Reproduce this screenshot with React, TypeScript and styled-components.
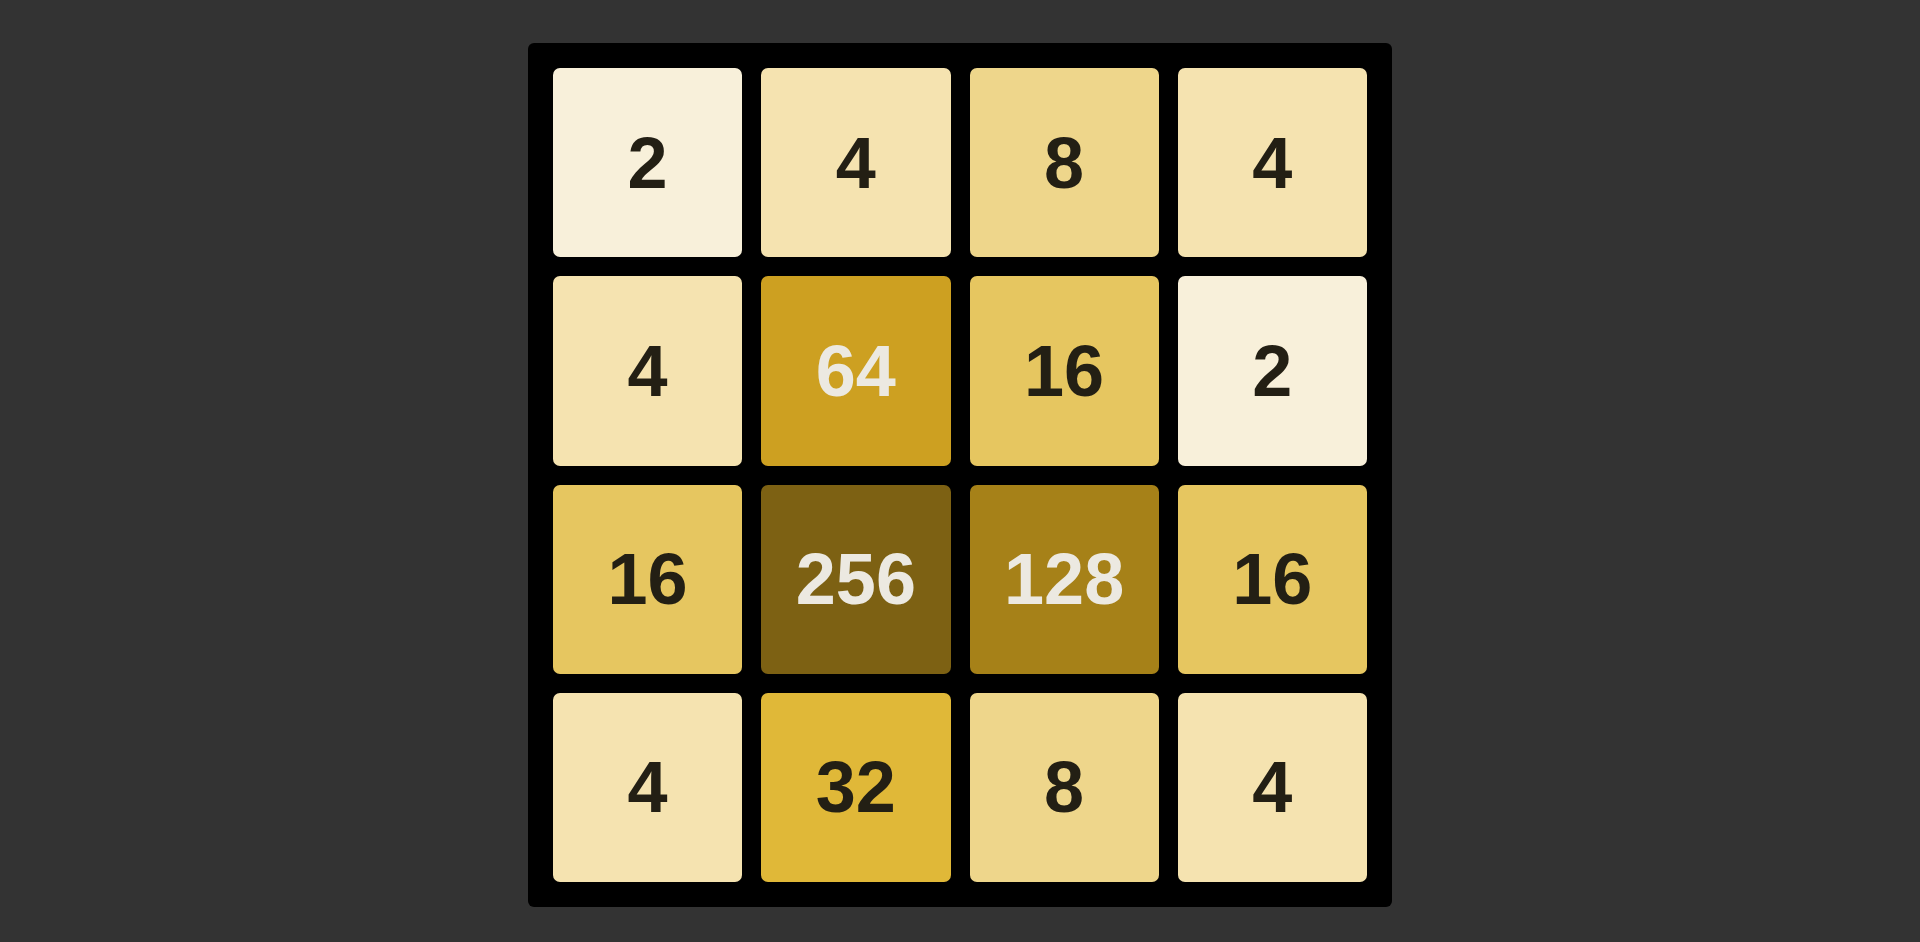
import React from "react";
import styled, { createGlobalStyle } from "styled-components";

const GlobalStyle = createGlobalStyle`
  html, body {
    margin: 0;
    padding: 0;
    background: #333333;
  }
  body {
    font-family: "Liberation Sans", Arial, sans-serif;
  }
`;

const Page = styled.div`
  min-height: 942px;
  box-sizing: border-box;
  padding-top: 43px;
  display: flex;
  justify-content: center;
  align-items: flex-start;
`;

const Board = styled.div`
  width: 864px;
  height: 864px;
  box-sizing: border-box;
  padding: 25px;
  background: #000000;
  border-radius: 6px;
  display: grid;
  grid-template-columns: repeat(4, 1fr);
  grid-template-rows: repeat(4, 1fr);
  gap: 19px;
`;

const palette: Record<number, { bg: string; fg: string }> = {
  2: { bg: "#f8f0da", fg: "#231f14" },
  4: { bg: "#f5e3b0", fg: "#231f14" },
  8: { bg: "#eed68b", fg: "#231f14" },
  16: { bg: "#e6c660", fg: "#231f14" },
  32: { bg: "#e0b838", fg: "#231f14" },
  64: { bg: "#cda021", fg: "#ece9e1" },
  128: { bg: "#a68118", fg: "#ece9e1" },
  256: { bg: "#7d6113", fg: "#ece9e1" },
};

const Tile = styled.div<{ $value: number }>`
  border-radius: 7px;
  display: flex;
  align-items: center;
  justify-content: center;
  font-family: "Liberation Sans", Arial, sans-serif;
  font-weight: 700;
  font-size: 72px;
  line-height: 1;
  background: ${(p) => palette[p.$value].bg};
  color: ${(p) => palette[p.$value].fg};
`;

const grid = [
  [2, 4, 8, 4],
  [4, 64, 16, 2],
  [16, 256, 128, 16],
  [4, 32, 8, 4],
];

export default function App() {
  return (
    <>
      <GlobalStyle />
      <Page>
        <Board>
          {grid.flat().map((v, i) => (
            <Tile key={i} $value={v}>
              {v}
            </Tile>
          ))}
        </Board>
      </Page>
    </>
  );
}
